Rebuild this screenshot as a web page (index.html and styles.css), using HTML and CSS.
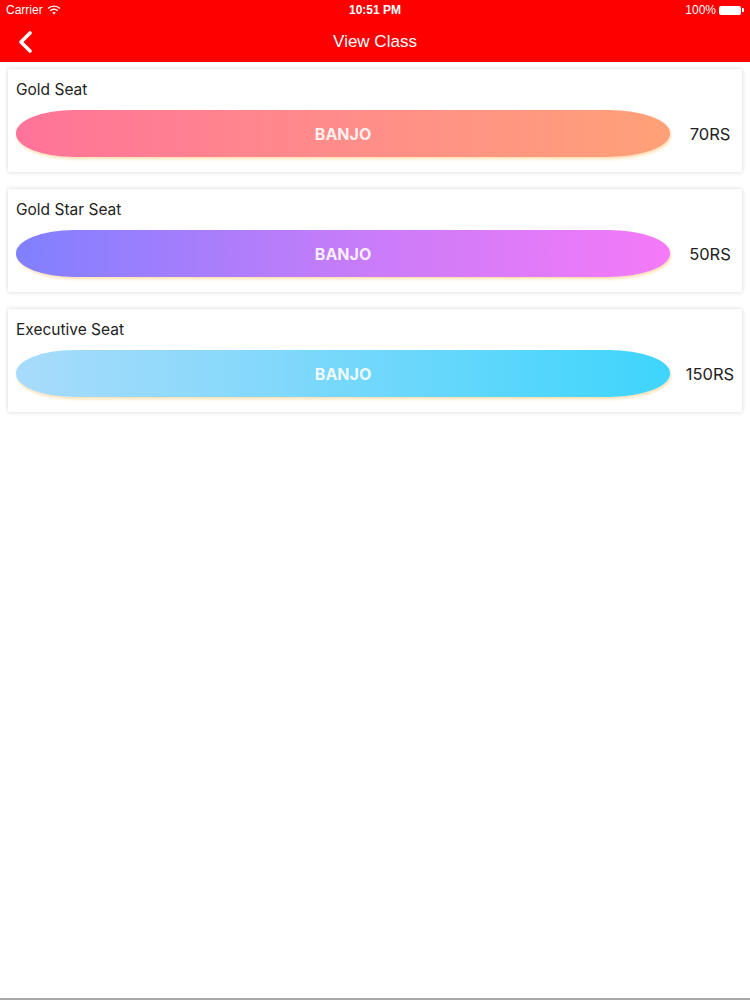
FILE: index.html
```html
<!DOCTYPE html>
<html lang="en">
<head>
    <meta charset="UTF-8">
    <meta name="viewport" content="width=device-width, initial-scale=1.0">
    <title>View Class</title>
    <link rel="stylesheet" href="styles.css">
</head>
<body>

<header class="topbar">
    <div class="statusbar">
        <div class="carrier">
            Carrier
            <svg class="wifi" width="14" height="10" viewBox="0 0 14 10">
                <path d="M1 3.6 A8.5 8.5 0 0 1 13 3.6" fill="none" stroke="#fff" stroke-width="1.4"/>
                <path d="M3.2 5.8 A5.4 5.4 0 0 1 10.8 5.8" fill="none" stroke="#fff" stroke-width="1.4"/>
                <path d="M7 9.6 L5.2 7.8 A2.6 2.6 0 0 1 8.8 7.8 Z" fill="#fff"/>
            </svg>
        </div>
        <div class="clock">10:51 PM</div>
        <div class="battery">
            100%
            <span class="battery-body"></span><span class="battery-tip"></span>
        </div>
    </div>
    <div class="navbar">
        <a href="#" class="back">
            <svg width="18" height="24" viewBox="0 0 18 24">
                <path d="M14 3 L5 12 L14 21" fill="none" stroke="#fff" stroke-width="3.6" stroke-linecap="round" stroke-linejoin="round"/>
            </svg>
        </a>
        <div class="title">View Class</div>
    </div>
</header>

<main class="classes">
    <div class="seat">
        <div class="seat-name">Gold Seat</div>
        <div class="seat-row">
            <div class="pill pill-gold">BANJO</div>
            <div class="price">70RS</div>
        </div>
    </div>
    <div class="seat">
        <div class="seat-name">Gold Star Seat</div>
        <div class="seat-row">
            <div class="pill pill-star">BANJO</div>
            <div class="price">50RS</div>
        </div>
    </div>
    <div class="seat">
        <div class="seat-name">Executive Seat</div>
        <div class="seat-row">
            <div class="pill pill-exec">BANJO</div>
            <div class="price">150RS</div>
        </div>
    </div>
</main>

<footer class="bottom-line"></footer>

</body>
</html>
```

FILE: styles.css
```css
html, body {
    margin: 0;
    padding: 0;
}
body {
    font-family: Inter, "Liberation Sans", Arial, sans-serif;
    background-color: #ffffff;
    color: #222;
    height: 1000px;
    display: flex;
    flex-direction: column;
}
.topbar {
    background-color: #fe0000;
    color: white;
}
.statusbar {
    height: 20px;
    display: flex;
    justify-content: space-between;
    align-items: center;
    padding: 0 6px;
    font-family: "Liberation Sans", Arial, sans-serif;
    font-size: 12px;
    position: relative;
}
.carrier {
    display: flex;
    align-items: center;
    gap: 4px;
}
.clock {
    position: absolute;
    left: 0;
    right: 0;
    text-align: center;
    font-weight: bold;
}
.battery {
    display: flex;
    align-items: center;
}
.battery-body {
    width: 22px;
    height: 9px;
    background-color: #fff;
    border-radius: 2px;
    margin-left: 3px;
}
.battery-tip {
    width: 2px;
    height: 4px;
    background-color: #fff;
    border-radius: 0 1px 1px 0;
    margin-left: 1px;
}
.navbar {
    height: 42px;
    display: flex;
    align-items: center;
    justify-content: center;
    position: relative;
}
.back {
    position: absolute;
    left: 16px;
    top: 10px;
    display: flex;
}
.title {
    font-family: "Liberation Sans", Arial, sans-serif;
    font-size: 17px;
    padding-top: 2px;
}
.classes {
    flex: 1;
    padding: 7px 8px;
    display: flex;
    flex-direction: column;
    gap: 17px;
}
.seat {
    background-color: #fff;
    box-shadow: 0 0 4px rgba(0, 0, 0, 0.18);
    padding: 11px 0 15px 8px;
}
.seat-name {
    font-size: 15.5px;
    margin-bottom: 11px;
}
.seat-row {
    display: flex;
    align-items: center;
}
.pill {
    flex: 1;
    height: 47px;
    border-radius: 58px 62px 62px 58px / 23px 23px 23px 23px;
    display: flex;
    align-items: center;
    justify-content: center;
    color: rgba(255, 255, 255, 0.9);
    font-weight: bold;
    font-size: 16px;
    box-shadow: 1px 2px 3px rgba(255, 210, 140, 0.7);
}
.pill-gold {
    background: linear-gradient(to right, #ff7399, #ff8a8b 45%, #ffa178);
}
.pill-star {
    background: linear-gradient(to right, #8080ff, #c57cf9 50%, #f57af8);
}
.pill-exec {
    background: linear-gradient(to right, #a8dbfb, #8cd9fb 30%, #3ed5fc);
}
.price {
    width: 64px;
    margin-left: 8px;
    text-align: center;
    font-size: 16.5px;
    color: #222;
}
.bottom-line {
    height: 2px;
    background-color: #a8a8a8;
}
```
